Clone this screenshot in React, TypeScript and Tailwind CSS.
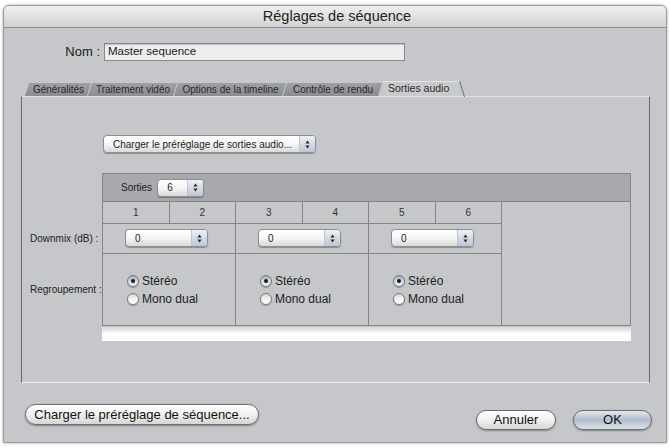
import clsx from "clsx";

const tabs = ["Généralités", "Traitement vidéo", "Options de la timeline", "Contrôle de rendu"];
const tabWidths = [66, 89, 112, 99];

function Arrows() {
  return (
    <svg width="5" height="9" viewBox="0 0 5 9" className="fill-[#2a2a2a]">
      <path d="M2.5 0.5 L4.6 3.4 L0.4 3.4 Z" />
      <path d="M2.5 8.5 L4.6 5.6 L0.4 5.6 Z" />
    </svg>
  );
}

function Popup({ label, className }: { label: string; className?: string }) {
  return (
    <div
      className={clsx(
        "flex items-stretch overflow-hidden rounded-[4px] border border-[#8f8f8f] bg-gradient-to-b from-white via-[#f6f6f6] to-[#d9d9d9] shadow-[0_1px_1px_rgba(0,0,0,0.3)]",
        className,
      )}
    >
      <span className="flex flex-1 items-center pl-[9px] text-[10px] text-[#222]">{label}</span>
      <span className="flex w-[16px] items-center justify-center border-l border-[#c4c4c4] bg-gradient-to-b from-[#eef2f7] via-[#d3dbe6] to-[#bcc7d6]">
        <Arrows />
      </span>
    </div>
  );
}

function Radio({ checked, label }: { checked?: boolean; label: string }) {
  return (
    <div className="flex h-[18px] items-center gap-[3px] text-[12px] text-[#1d1d1d]">
      <span
        className={clsx(
          "flex h-[12px] w-[12px] items-center justify-center rounded-full border border-[#7a7a7a] shadow-[0_1px_1px_rgba(0,0,0,0.25)]",
          checked
            ? "bg-gradient-to-b from-[#9fa9b6] via-[#d5dbe3] to-[#eef1f5]"
            : "bg-gradient-to-b from-[#d4d4d4] via-[#f5f5f5] to-white",
        )}
      >
        {checked && <span className="h-[4px] w-[4px] rounded-full bg-[#1a1a1a]" />}
      </span>
      {label}
    </div>
  );
}

function Group({ a, b }: { a: number; b: number }) {
  return (
    <div className="flex w-[133px] shrink-0 flex-col border-r border-[#858585]">
      <div className="flex h-[21px] text-[10px] text-[#333]">
        <span className="flex flex-1 items-center justify-center border-r border-[#858585]">{a}</span>
        <span className="flex flex-1 items-center justify-center">{b}</span>
      </div>
      <div className="h-[30px] border-t border-[#858585] pl-[22px] pt-[5px]">
        <Popup label="0" className="h-[18px] w-[83px]" />
      </div>
      <div className="h-[72px] border-t border-[#858585] pl-[24px] pt-[18px]">
        <Radio checked label="Stéréo" />
        <Radio label="Mono dual" />
      </div>
    </div>
  );
}

function AquaButton({ label, className, blue }: { label: string; className?: string; blue?: boolean }) {
  return (
    <div
      className={clsx(
        "flex items-center justify-center rounded-full border border-[#6c6c6c] text-[13px] text-[#111] shadow-[0_1px_2px_rgba(0,0,0,0.35)]",
        blue
          ? "bg-gradient-to-b from-[#e3e8ee] via-[#b2bccb] to-[#dbe2ea]"
          : "bg-gradient-to-b from-white via-[#f1f1f1] to-[#d5d5d5]",
        className,
      )}
    >
      {label}
    </div>
  );
}

export default function App() {
  return (
    <div className="h-[448px] w-[670px] bg-white pl-[3px] pt-[5px] font-['Liberation_Sans',Arial,sans-serif] text-[#1a1a1a]">
      <div className="flex h-[438px] w-[664px] flex-col overflow-hidden rounded-t-[6px] border border-[#9a9a9a] bg-[#c5c7ca] shadow-[0_0_3px_rgba(0,0,0,0.35)]">
        {/* title bar */}
        <div className="flex h-[22px] shrink-0 items-center justify-center border-b border-[#8d8d8d] bg-gradient-to-b from-[#efefef] to-[#d2d2d2] pl-[4px] text-[14.5px] text-[#222]">
          Réglages de séquence
        </div>

        {/* name */}
        <div className="mt-[15px] flex h-[18px] items-center">
          <span className="w-[97px] pr-[1px] text-right text-[13px]">Nom :</span>
          <div className="ml-[3px] flex h-[18px] w-[301px] items-center border border-[#8a8a8a] bg-[#eeeeee] pl-[3px] text-[11.5px] shadow-[inset_0_1px_1px_rgba(0,0,0,0.2)]">
            Master sequence
          </div>
        </div>

        {/* tabs + pane */}
        <div className="ml-[17px] mt-[19px] w-[629px]">
          <div className="flex h-[16px] items-end pl-[4px]">
            {tabs.map((t, i) => (
              <div
                key={t}
                style={{ width: tabWidths[i] }}
                className="mr-[-3px] flex h-[13px] items-center justify-center bg-gradient-to-b from-[#a0a1a5] to-[#8b8c90] text-[10px] text-[#2a2a2a] [clip-path:polygon(0_100%,4px_0,100%_0,calc(100%_-_4px)_100%)]"
              >
                <span className="pl-[1px]">{t}</span>
              </div>
            ))}
            <div className="relative ml-[4px] flex h-[15px] w-[76px] items-center border-t border-[#e6e6e6] bg-[#c8cacd] pl-[5px] text-[10.5px] text-[#2a2a2a]">
              Sorties audio
              <svg width="6" height="16" viewBox="0 0 6 16" className="absolute right-[-6px] top-[-1px]">
                <line x1="0.5" y1="0" x2="5.5" y2="16" stroke="#707070" strokeWidth="1" />
              </svg>
            </div>
          </div>

          <div className="h-[287px] border border-[#7a7a7a] border-t-[#e2e3e5] border-b-[#eeeeee] border-l-[#6a6a6a] border-r-[#6a6a6a]">
            <div className="ml-[81px] mt-[38px]">
              <Popup label="Charger le préréglage de sorties audio..." className="h-[18px] w-[213px]" />
            </div>

            {/* header */}
            <div className="ml-[80px] mt-[20px] flex h-[29px] w-[529px] items-center border border-[#858585] bg-[#a8a9ac] pl-[18px]">
              <span className="text-[10px] text-[#222]">Sorties</span>
              <Popup label="6" className="ml-[5px] h-[18px] w-[47px]" />
            </div>

            {/* body */}
            <div className="flex">
              <div className="flex w-[80px] flex-col pl-[8px] text-[10px] text-[#222]">
                <div className="h-[21px]" />
                <div className="flex h-[30px] items-center">Downmix (dB) :</div>
                <div className="flex h-[73px] items-center">Regroupement :</div>
              </div>
              <div className="flex w-[529px] border-x border-b border-[#858585]">
                <Group a={1} b={2} />
                <Group a={3} b={4} />
                <Group a={5} b={6} />
              </div>
            </div>

            <div className="ml-[80px] mt-[1px] h-[14px] w-[529px] bg-gradient-to-b from-[#d6d6d6] via-white to-white" />
          </div>
        </div>

        {/* bottom buttons */}
        <div className="mt-[21px] flex items-start">
          <AquaButton label="Charger le préréglage de séquence..." className="ml-[21px] h-[21px] w-[234px]" />
          <div className="ml-auto mr-[14px] mt-[6px] flex gap-[17px]">
            <AquaButton label="Annuler" className="h-[20px] w-[80px]" />
            <AquaButton label="OK" blue className="h-[20px] w-[79px]" />
          </div>
        </div>
      </div>
    </div>
  );
}
